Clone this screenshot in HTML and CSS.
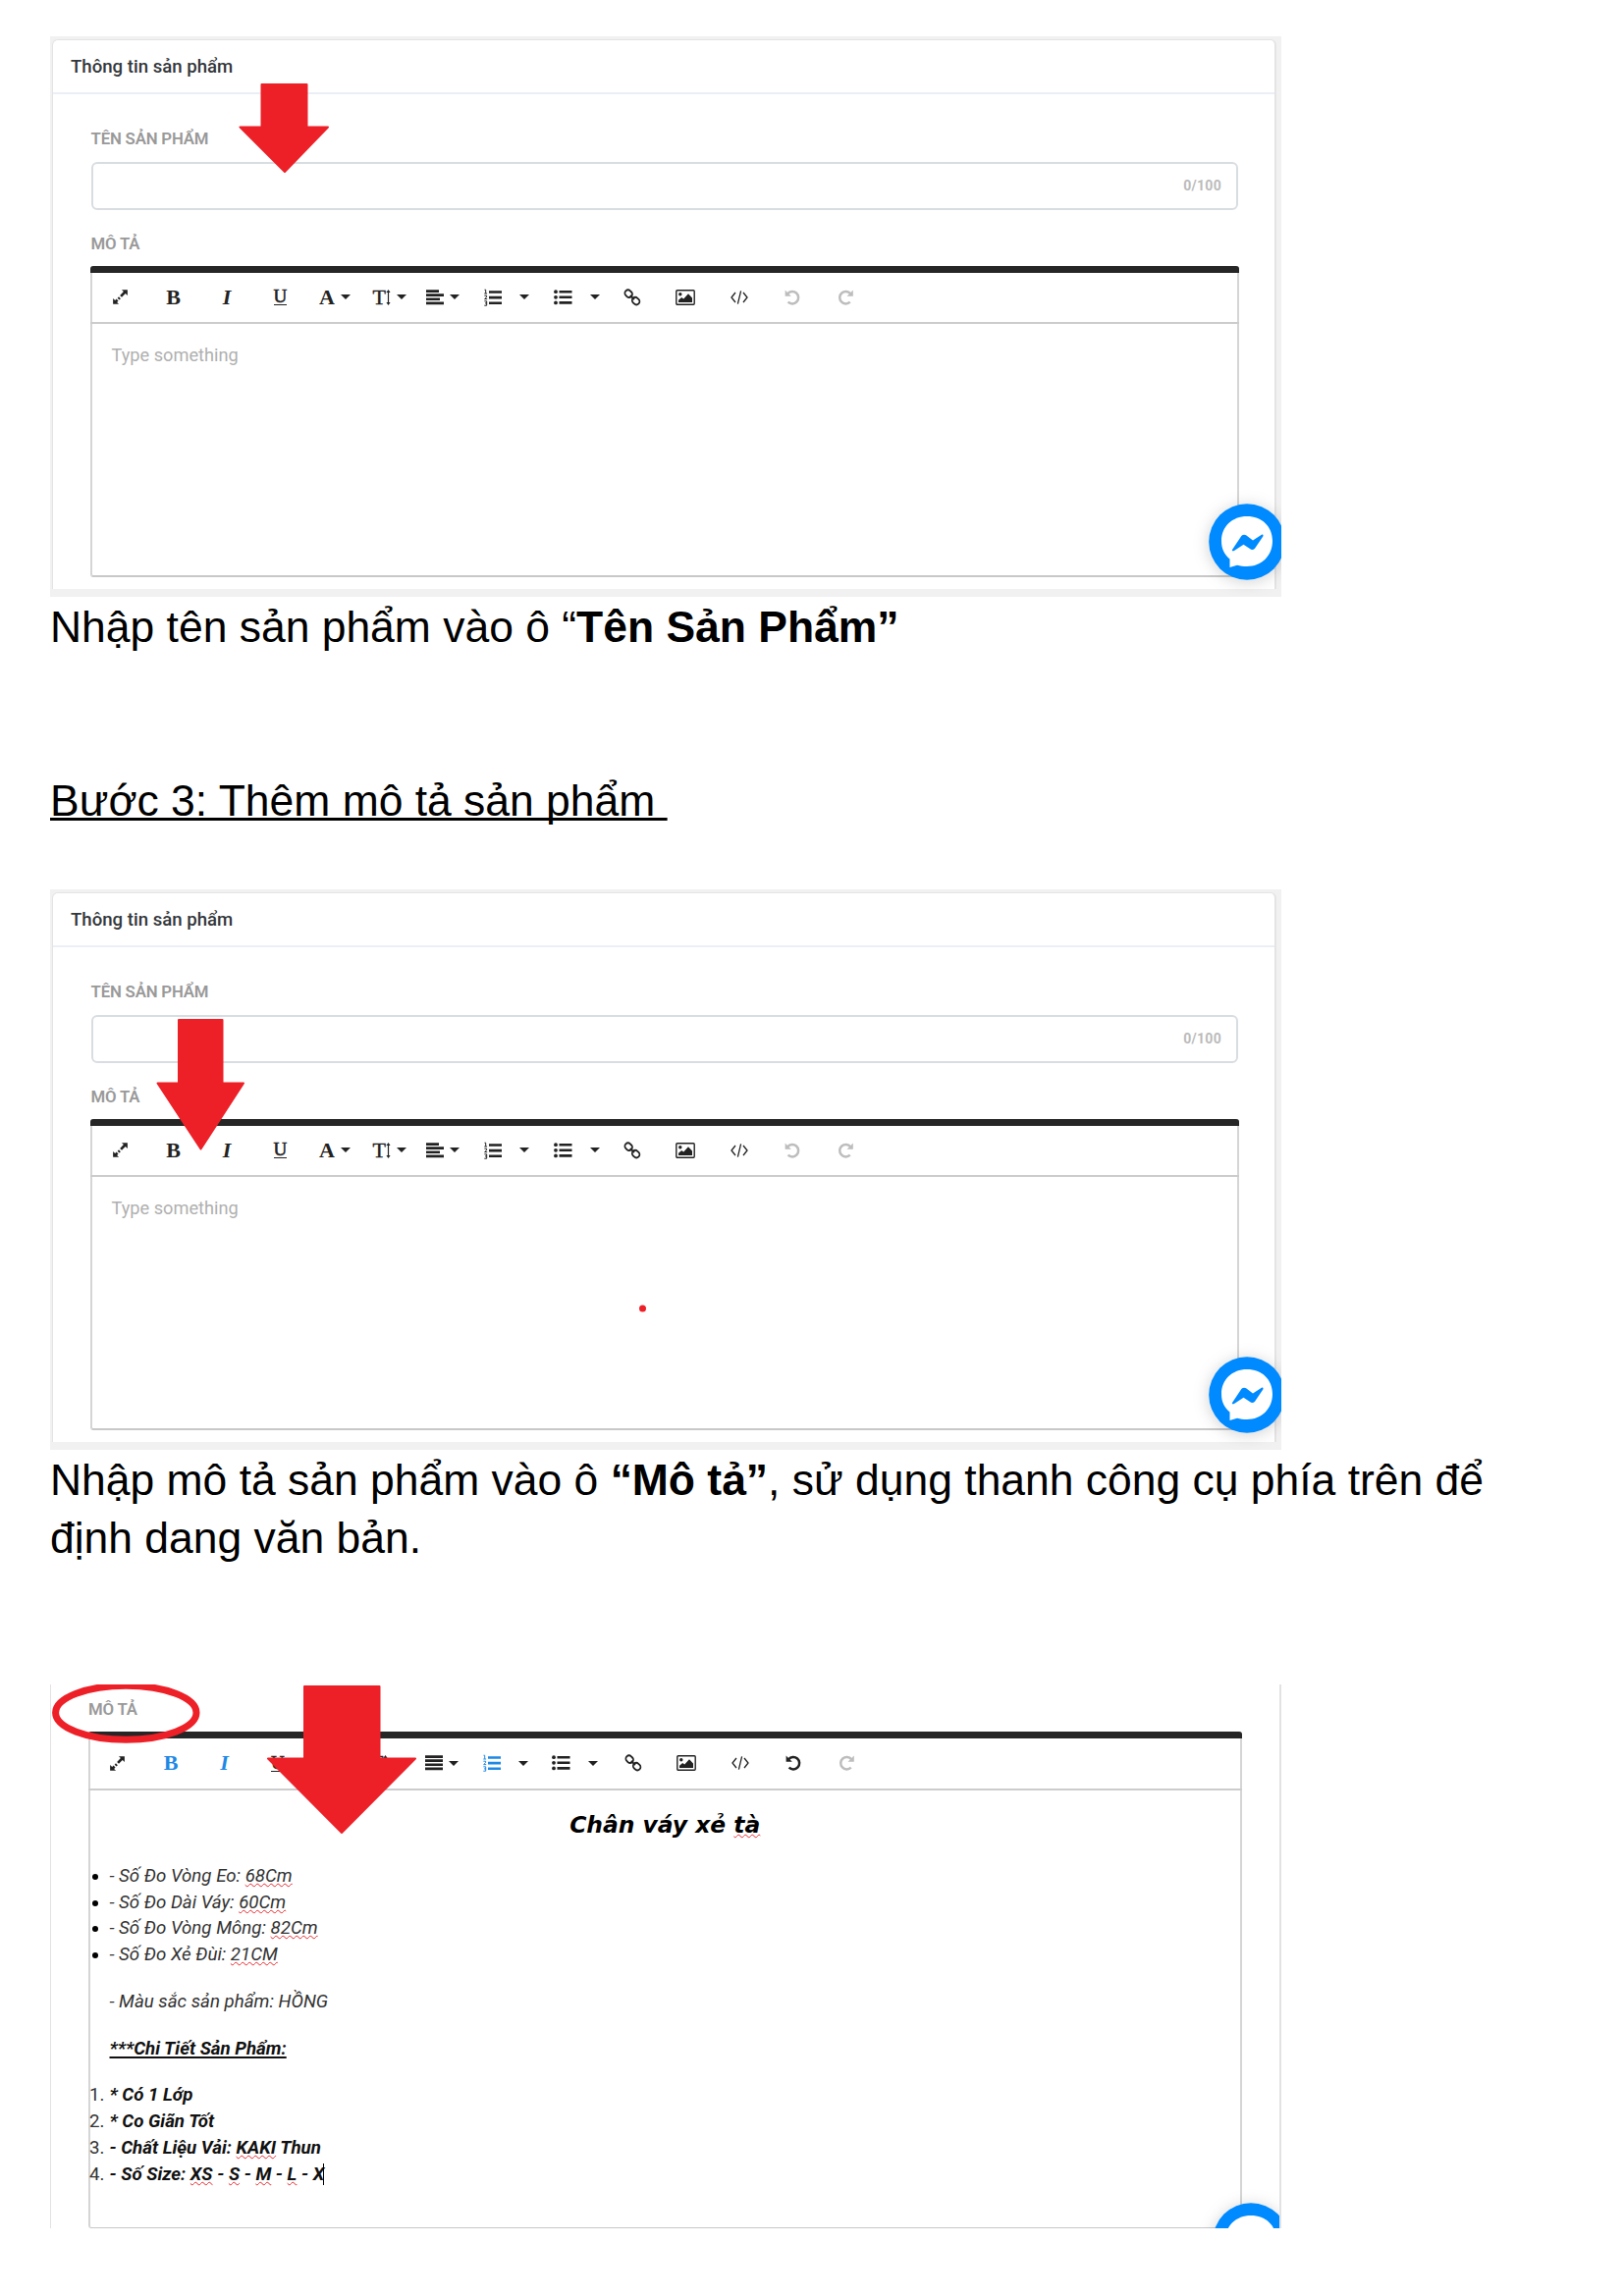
FILE: index.html
```html
<!DOCTYPE html>
<html lang="vi">
<head>
<meta charset="utf-8">
<title>Thêm mô tả sản phẩm</title>
<link rel="stylesheet" href="styles.css">
</head>
<body>
<svg class="defs" width="0" height="0" aria-hidden="true">
  <symbol id="expand" viewBox="0 0 18 18"><path d="M10.5 1.2h6.3v6.3l-2.2-2.2-4 4-2-2 4-4zM7.5 16.8H1.2v-6.3l2.2 2.2 1.5-1.5 2 2-1.5 1.5zM6 10.2l1.4-1.4 2 2-1.4 1.4z"/></symbol>
  <symbol id="align-left" viewBox="0 0 18 16"><path d="M0 .2h13v2.700H0zM0 4.300h18V7H0zM0 8.400h14v2.700H0zM0 12.500h18v2.700H0z"/></symbol>
  <symbol id="align-full" viewBox="0 0 18 16"><path d="M0 .2h18v2.700H0zM0 4.300h18V7H0zM0 8.400h18v2.700H0zM0 12.500h18v2.700H0z"/></symbol>
  <symbol id="height" viewBox="0 0 5 16"><path d="M2.500 2v12" fill="none" stroke="currentColor" stroke-width="1.200"/><path d="M2.500 0L4.600 3H.4zM2.500 16L.4 13h4.200z"/></symbol>
  <symbol id="ol" viewBox="0 0 18 18"><path d="M5 2.200h13v2.600H5zM5 7.800h13v2.600H5zM5 13.400h13V16H5z"/><path d="M.5 1.2h1.2v3.6M.3 5h2.8M.4 7.2h2.2v1.5L.6 10.600h2.600M.4 12.800h2.300v4.400H.3M1 14.900h1.600" fill="none" stroke="currentColor" stroke-width="1"/></symbol>
  <symbol id="ul" viewBox="0 0 19 16"><path d="M5.500.9h13v2.600h-13zM5.500 6.500h13v2.600h-13zM5.500 12.100h13v2.600h-13z"/><circle cx="2" cy="2.200" r="1.900"/><circle cx="2" cy="7.800" r="1.900"/><circle cx="2" cy="13.400" r="1.900"/></symbol>
  <symbol id="caret" viewBox="0 0 10 5"><path d="M0 0h10L5 5z"/></symbol>
  <symbol id="link" viewBox="0 0 18 18"><g fill="none" stroke="currentColor" stroke-width="1.800"><rect x="-4" y="-3.200" width="8" height="6.400" rx="3.200" transform="translate(5.200 5.200) rotate(45)"/><rect x="-4" y="-3.200" width="8" height="6.400" rx="3.200" transform="translate(12.600 12.600) rotate(45)"/><path d="M6.800 6.800l4.200 4.200"/></g></symbol>
  <symbol id="image" viewBox="0 0 20 16"><rect x=".8" y=".8" width="18.400" height="14.400" rx="1" fill="none" stroke="currentColor" stroke-width="1.400"/><circle cx="4.800" cy="4.700" r="1.700"/><path d="M3 13v-2.300l3.200-2.600 2 1.400L13 4.300l4 4.300V13z"/></symbol>
  <symbol id="code" viewBox="0 0 18 14"><path d="M5 2L1 7l4 5M13 2l4 5-4 5M10.600.3L7.400 13.700" fill="none" stroke="currentColor" stroke-width="1.300"/></symbol>
  <symbol id="undo" viewBox="0 0 17 16"><path d="M3.200 4.200A6.200 6.200 0 1 1 3.600 12.600" fill="none" stroke="currentColor" stroke-width="2.500"/><path d="M.6.6v6.200h6.200z"/></symbol>
  <symbol id="messenger" viewBox="0 0 78 78"><circle cx="39" cy="39" r="38.800" fill="#008aff"/><path d="M39 13C24 13 13 23.500 13 38c0 8 3 14 8.500 18.500V65l7.500-2.200c3 .9 6.500 1.300 10 1.300 15 0 26-11 26-26S54 13 39 13z" fill="#fff"/><path d="M24 47l9.500-14.200c1.500-1.500 3.500-1.500 5-.2l6.500 4.800 8.500-5.500c1.800-.8 2.500.2 1.800 1.700L47 45.700c-1.500 1.700-3.500 1.700-5 .4L35.500 41.700 26 48c-1.500.6-2.600 0-2-1z" fill="#008aff"/></symbol>
</svg>

<main class="page">
  <figure class="shot">
    <section class="card">
      <header class="card-head">Thông tin sản phẩm</header>
      <div class="form">
        <div class="label">TÊN SẢN PHẨM</div>
        <div class="field"><span class="count">0/100</span></div>
        <div class="label second">MÔ TẢ</div>
        <div class="editor">
          <div class="toolbar">
            <span class="btn"><svg class="i17"><use href="#expand"/></svg></span>
            <span class="btn"><b class="g">B</b></span>
            <span class="btn"><b class="g it">I</b></span>
            <span class="btn"><b class="g un">U</b></span>
            <span class="btn drop wide"><b class="g">A</b><svg class="caret"><use href="#caret"/></svg></span>
            <span class="btn drop"><span class="g tt">T<svg class="i5"><use href="#height"/></svg></span><svg class="caret"><use href="#caret"/></svg></span>
            <span class="btn drop"><svg class="i16"><use href="#align-left"/></svg><svg class="caret"><use href="#caret"/></svg></span>
            <span class="btn list"><svg class="i18"><use href="#ol"/></svg><svg class="caret"><use href="#caret"/></svg></span>
            <span class="btn list"><svg class="i19"><use href="#ul"/></svg><svg class="caret"><use href="#caret"/></svg></span>
            <span class="btn pull"><svg class="i18"><use href="#link"/></svg></span>
            <span class="btn"><svg class="img"><use href="#image"/></svg></span>
            <span class="btn"><svg class="code"><use href="#code"/></svg></span>
            <span class="btn off"><svg class="i16u"><use href="#undo"/></svg></span>
            <span class="btn off flip"><svg class="i16u"><use href="#undo"/></svg></span>
          </div>
          <div class="area"><span class="hint">Type something</span></div>
        </div>
      </div>
    </section>
    <svg class="marks" viewBox="51 37 1254 571"><path d="M266.500 86h46v43.500h21.500L290 175l-45.500-45.500h22z"/></svg>
    <svg class="chat"><use href="#messenger"/></svg>
  </figure>

  <p class="text">Nhập tên sản phẩm vào ô “<b>Tên Sản Phẩm”</b></p>
  <h2 class="text step">Bước 3: Thêm mô tả sản phẩm&nbsp;</h2>

  <figure class="shot">
    <section class="card">
      <header class="card-head">Thông tin sản phẩm</header>
      <div class="form">
        <div class="label">TÊN SẢN PHẨM</div>
        <div class="field"><span class="count">0/100</span></div>
        <div class="label second">MÔ TẢ</div>
        <div class="editor">
          <div class="toolbar">
            <span class="btn"><svg class="i17"><use href="#expand"/></svg></span>
            <span class="btn"><b class="g">B</b></span>
            <span class="btn"><b class="g it">I</b></span>
            <span class="btn"><b class="g un">U</b></span>
            <span class="btn drop wide"><b class="g">A</b><svg class="caret"><use href="#caret"/></svg></span>
            <span class="btn drop"><span class="g tt">T<svg class="i5"><use href="#height"/></svg></span><svg class="caret"><use href="#caret"/></svg></span>
            <span class="btn drop"><svg class="i16"><use href="#align-left"/></svg><svg class="caret"><use href="#caret"/></svg></span>
            <span class="btn list"><svg class="i18"><use href="#ol"/></svg><svg class="caret"><use href="#caret"/></svg></span>
            <span class="btn list"><svg class="i19"><use href="#ul"/></svg><svg class="caret"><use href="#caret"/></svg></span>
            <span class="btn pull"><svg class="i18"><use href="#link"/></svg></span>
            <span class="btn"><svg class="img"><use href="#image"/></svg></span>
            <span class="btn"><svg class="code"><use href="#code"/></svg></span>
            <span class="btn off"><svg class="i16u"><use href="#undo"/></svg></span>
            <span class="btn off flip"><svg class="i16u"><use href="#undo"/></svg></span>
          </div>
          <div class="area"><span class="hint">Type something</span></div>
        </div>
      </div>
    </section>
    <svg class="marks" viewBox="51 906 1254 571"><path d="M182 1039h44.500v64.500H248l-43.500 67-44-67H182z"/><circle cx="654.500" cy="1333" r="2.500"/></svg>
    <svg class="chat"><use href="#messenger"/></svg>
  </figure>

  <p class="text">Nhập mô tả sản phẩm vào ô <b>“Mô tả”</b>, sử dụng thanh công cụ phía trên để<br>định dang văn bản.</p>

  <figure class="shot filled">
    <div class="label">MÔ TẢ</div>
    <div class="editor">
      <div class="toolbar">
        <span class="btn"><svg class="i17"><use href="#expand"/></svg></span>
        <span class="btn on"><b class="g">B</b></span>
        <span class="btn on"><b class="g it">I</b></span>
        <span class="btn"><b class="g un">U</b></span>
        <span class="btn drop wide"><b class="g">A</b><svg class="caret"><use href="#caret"/></svg></span>
        <span class="btn drop"><span class="g tt">T<svg class="i5"><use href="#height"/></svg></span><svg class="caret"><use href="#caret"/></svg></span>
        <span class="btn drop nudge"><svg class="i16"><use href="#align-full"/></svg><svg class="caret"><use href="#caret"/></svg></span>
        <span class="btn list"><svg class="i18 on"><use href="#ol"/></svg><svg class="caret"><use href="#caret"/></svg></span>
        <span class="btn list"><svg class="i19"><use href="#ul"/></svg><svg class="caret"><use href="#caret"/></svg></span>
        <span class="btn pull"><svg class="i18"><use href="#link"/></svg></span>
        <span class="btn"><svg class="img"><use href="#image"/></svg></span>
        <span class="btn"><svg class="code"><use href="#code"/></svg></span>
        <span class="btn"><svg class="i16u"><use href="#undo"/></svg></span>
        <span class="btn off flip"><svg class="i16u"><use href="#undo"/></svg></span>
      </div>
      <div class="doc">
        <h3 class="doc-title">Chân váy xẻ <u class="sp">tà</u></h3>
        <ul class="items">
          <li>- Số Đo Vòng Eo: <u class="sp">68Cm</u></li>
          <li>- Số Đo Dài Váy: <u class="sp">60Cm</u></li>
          <li>- Số Đo Vòng Mông: <u class="sp">82Cm</u></li>
          <li>- Số Đo Xẻ Đùi: <u class="sp">21CM</u></li>
        </ul>
        <p class="line">- Màu sắc sản phẩm: HỒNG</p>
        <p class="line strong"><u>***Chi Tiết Sản Phẩm:</u></p>
        <ol class="items strong">
          <li><span class="n">1.</span>* Có 1 Lớp</li>
          <li><span class="n">2.</span>* Co Giãn Tốt</li>
          <li><span class="n">3.</span>- Chất Liệu Vải: <u class="sp">KAKI</u> Thun</li>
          <li><span class="n">4.</span>- Số Size: <u class="sp">XS</u> - <u class="sp">S</u> - <u class="sp">M</u> - <u class="sp">L</u> - X<i class="cursor"></i></li>
        </ol>
      </div>
    </div>
    <svg class="marks" viewBox="51 1716 1254 554"><path d="M310 1718h76.500v73.500H423L348 1867l-75-75.500h37z"/><ellipse cx="128.300" cy="1744.700" rx="71.700" ry="27.500"/></svg>
    <svg class="chat"><use href="#messenger"/></svg>
  </figure>
</main>
</body>
</html>
```
FILE: styles.css
```css
* { box-sizing: border-box; }
body { margin: 0; background: #fff; font-family: Roboto, "Noto Sans", sans-serif; color: #212529; }
svg { fill: currentColor; display: block; flex: none; }
.defs { position: absolute; }
.page { width: 1654px; height: 2339px; padding: 37px 51px 0; overflow: hidden; }

/* illustrations */
.shot { position: relative; width: 1254px; height: 571px; margin: 0; padding: 3px 5px 8px 2px; background: #f1f1f1; overflow: hidden; }
.card { height: 560px; background: #fff; border: solid #e4e4e4; border-width: 1px 2px 0 1px; border-radius: 6px 6px 0 0; }
.card-head { height: 54.500px; line-height: 54px; padding-left: 18px; border-bottom: 2px solid #ebeff5; font-size: 18.600px; font-weight: 500; color: #33373b; }
.form { padding: 35px 36px 0 38px; }
.label { height: 20px; line-height: 20px; padding-left: .5px; font-size: 16.800px; font-weight: 600; letter-spacing: -.18px; color: #999; }
.label.second { margin-top: 24.500px; }
.field { display: flex; align-items: center; justify-content: flex-end; height: 49px; margin: 14px 1px 0; padding-right: 15px; border: 2px solid #d8dde2; border-radius: 6px; }
.count { font-size: 14px; font-weight: 700; color: #bbb; letter-spacing: .3px; }
.editor { height: 317.500px; margin-top: 12.500px; border: solid #ccc; border-width: 0 2px 2px; border-radius: 3px; border-color: #d5d5d5 #d5d5d5 #c8c8c8; }
.toolbar { display: flex; align-items: center; height: 59.500px; margin: 0 -2px; padding-left: 3px; border-top: 7px solid #262626; border-bottom: 2px solid #ccc; border-radius: 3px 3px 0 0; }
.area { padding: 20px 19.500px; line-height: 23px; font-size: 18.200px; color: #b0b0b0; }
.hint { display: block; }

/* toolbar buttons */
.btn { display: flex; align-items: center; justify-content: center; flex: none; width: 54.400px; height: 48px; color: #222; }
.btn.wide { width: 57px; }
.drop { gap: 6px; }
.list { width: 71px; gap: 18px; position: relative; left: 2.500px; }
.pull { margin-left: -3.500px; }
.on { color: #1e88e5; }
.off { color: #bdbdbd; }
.flip { transform: scaleX(-1); }
.g { font: 700 22px/24px "Liberation Serif", serif; }
.it { font-style: italic; }
.un { height: 17px; font-size: 19px; line-height: 15px; border-bottom: 1.500px solid #222; font-weight: 400; -webkit-text-stroke: .6px; }
.tt { display: flex; align-items: center; font-weight: 400; -webkit-text-stroke: .4px; }
.i5 { width: 5px; height: 16px; }
.i17 { width: 17px; height: 17px; }
.i18 { width: 18px; height: 18px; }
.i16 { width: 18px; height: 16px; }
.i19 { width: 19px; height: 16px; }
.i16u { width: 17px; height: 16px; }
.img { width: 20px; height: 16px; }
.code { width: 18px; height: 14px; }
.caret { width: 10px; height: 5px; }

/* annotations laid over the illustrations */
.marks { position: absolute; inset: 0; width: 100%; height: 100%; fill: #ed2028; stroke: #ed2028; stroke-width: 2; stroke-linejoin: round; }
.marks ellipse { fill: none; stroke-width: 7; }
.chat { position: absolute; left: 1179.500px; top: 476px; width: 78px; height: 78px; overflow: visible; filter: drop-shadow(0 2px 8px rgba(0,0,0,.18)); }

/* guide text */
.text { margin: 1px 0 0; font: 400 44.440px/59px "Liberation Sans", Arial, sans-serif; color: #000; white-space: nowrap; }
.step { margin: 118px 0 61px; text-decoration: underline; text-decoration-thickness: 3px; text-underline-offset: 1.500px; text-decoration-skip-ink: none; }

/* filled editor */
.filled { height: 554px; margin-top: 120px; padding: 15px 38px 0 37.500px; background: #fff; border: solid #e2e2e2; border-width: 0 2px 0 1px; }
.filled .chat { left: 1182.500px; top: 528px; }
.filled .editor { height: 505.500px; margin-top: 13px; border-bottom-width: 1px; }
.filled .marks { width: 1254px; left: -1px; }
.filled .pull { margin-left: -1px; }
.nudge { margin-left: 1px; }
.doc { padding: 21.400px 20px 0; }
.doc-title { margin: 0 0 24.800px; text-align: center; font: italic 700 23.400px/28px "DejaVu Sans", sans-serif; color: #000; }
.items, .line { margin: 0 0 20.900px; padding: 0; list-style: none; font-size: 18.700px; line-height: 26.850px; font-style: italic; white-space: nowrap; color: #333; }
.items li { position: relative; height: 26.850px; }
ul.items li::before { content: ""; position: absolute; left: -17.500px; top: 11px; width: 6px; height: 6px; border-radius: 50%; background: #000; }
.items.strong, .line.strong { font-weight: 700; color: #111; }
.n { display: inline-block; width: 20.500px; margin-left: -20.500px; font-style: normal; font-weight: 400; color: #333; }
.sp { text-decoration: underline wavy #e8262c 1.300px; text-underline-offset: 1px; text-decoration-skip-ink: none; }
.line u:not(.sp) { text-decoration-thickness: 2px; text-underline-offset: 2px; text-decoration-skip-ink: none; }
.cursor { display: inline-block; width: 1px; height: 22px; margin-left: -1px; vertical-align: -5px; background: #000; }
```
